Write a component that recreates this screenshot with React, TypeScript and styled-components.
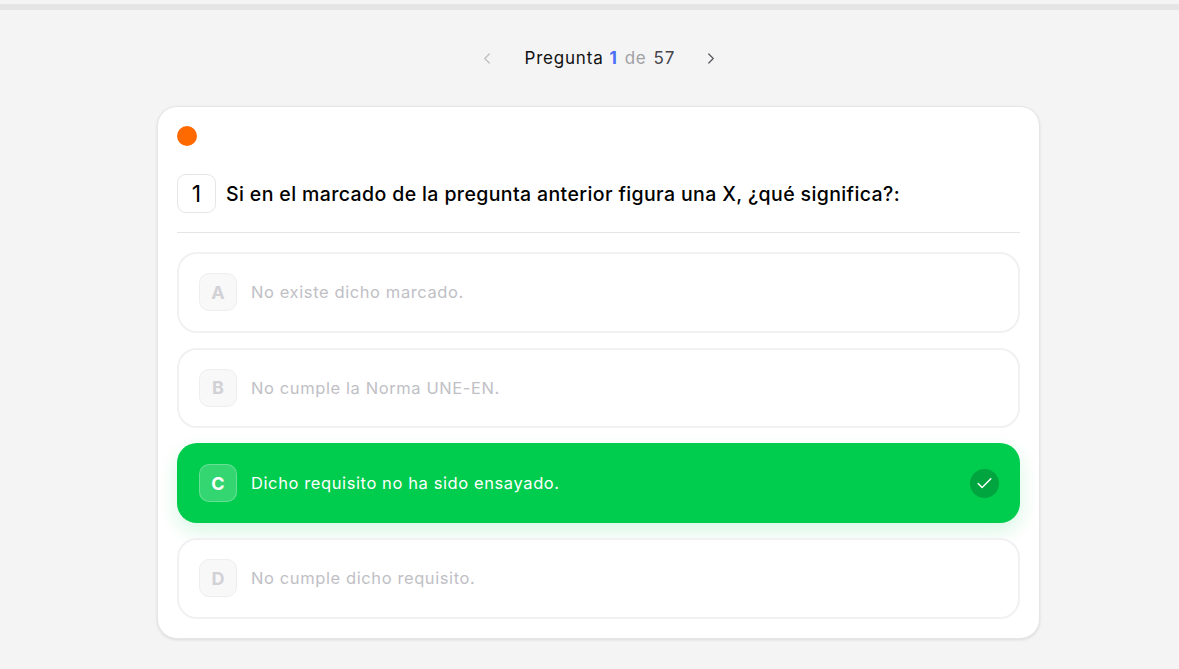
import React from 'react';
import styled, { createGlobalStyle } from 'styled-components';
import { ChevronLeft, ChevronRight, Check } from 'lucide-react';

const GlobalStyle = createGlobalStyle`
  html, body {
    margin: 0;
    padding: 0;
    background: #f4f4f4;
    font-family: Inter, "Open Sans", "Liberation Sans", sans-serif;
    overflow: hidden;
  }
  * {
    box-sizing: border-box;
  }
`;

const Page = styled.div`
  height: 669px;
  padding-top: 4px;
`;

const ProgressTrack = styled.div`
  width: 100%;
  height: 6px;
  background: #e5e5e6;
`;

const Content = styled.main`
  display: flex;
  flex-direction: column;
  align-items: center;
  padding-left: 18px;
`;

const Pager = styled.nav`
  display: flex;
  align-items: center;
  justify-content: center;
  height: 96px;
`;

const PagerButton = styled.button<{ $dim?: boolean }>`
  display: flex;
  align-items: center;
  justify-content: center;
  width: 18px;
  height: 18px;
  padding: 0;
  border: 0;
  background: none;
  color: ${(p) => (p.$dim ? '#bdbdc2' : '#55555c')};
`;

const PagerLabel = styled.div`
  display: flex;
  align-items: baseline;
  width: 148px;
  margin: 0 29px;
  font-size: 17px;
  font-weight: 400;
  letter-spacing: 0.8px;
  white-space: nowrap;
  color: #111;
`;

const Current = styled.span`
  margin-left: 6px;
  font-weight: 700;
  color: #4a6cf7;
`;

const Of = styled.span`
  margin-left: 7px;
  color: #a0a0a5;
`;

const Total = styled.span`
  margin-left: 7px;
  color: #45454b;
`;

const Card = styled.section`
  width: 883px;
  height: 533px;
  padding: 19px 19px 0;
  background: #fff;
  border: 1px solid #e6e6e6;
  border-radius: 20px;
  box-shadow: 0 1px 3px rgba(0, 0, 0, 0.1);
`;

const Dot = styled.div`
  width: 20px;
  height: 20px;
  border-radius: 50%;
  background: #ff6a00;
`;

const Question = styled.div`
  display: flex;
  align-items: center;
  gap: 10px;
  margin-top: 28px;
  padding-bottom: 19px;
  border-bottom: 1px solid #e5e5e7;
`;

const NumberBox = styled.div`
  display: flex;
  align-items: center;
  justify-content: center;
  width: 39px;
  height: 39px;
  border: 1px solid #e6e6e8;
  border-radius: 9px;
  font-size: 23px;
  font-weight: 400;
  color: #000;
`;

const QuestionText = styled.h1`
  margin: 0;
  font-size: 19.5px;
  font-weight: 500;
  letter-spacing: 0.38px;
  color: #000;
`;

const Options = styled.div`
  display: flex;
  flex-direction: column;
  gap: 15px;
  margin-top: 19px;
`;

const Option = styled.div<{ $correct?: boolean }>`
  display: flex;
  align-items: center;
  height: ${(p) => (p.$correct ? '80px' : '80.5px')};
  padding: ${(p) => (p.$correct ? '0 21px 0 22px' : '0 20px')};
  border: ${(p) => (p.$correct ? '0' : '2px solid #f1f1f3')};
  border-radius: 20px;
  background: ${(p) => (p.$correct ? '#00cc4e' : '#fff')};
  box-shadow: ${(p) => (p.$correct ? '0 8px 20px rgba(0, 204, 78, 0.16)' : 'none')};
`;

const Letter = styled.div<{ $correct?: boolean }>`
  display: flex;
  align-items: center;
  justify-content: center;
  flex: none;
  width: 38px;
  height: 38px;
  border-radius: 10px;
  border: 1px solid ${(p) => (p.$correct ? 'rgba(255, 255, 255, 0.25)' : '#eeeef0')};
  background: ${(p) => (p.$correct ? 'rgba(255, 255, 255, 0.2)' : '#f8f8f9')};
  color: ${(p) => (p.$correct ? '#fff' : '#d1d1d6')};
  font-size: 18px;
  font-weight: 700;
`;

const OptionText = styled.span<{ $correct?: boolean }>`
  flex: 1;
  margin-left: 14px;
  font-size: 16.5px;
  letter-spacing: 0.6px;
  color: ${(p) => (p.$correct ? '#fff' : '#c0c0c5')};
`;

const CheckMark = styled.div`
  display: flex;
  align-items: center;
  justify-content: center;
  width: 29px;
  height: 29px;
  border-radius: 50%;
  background: #00a53f;
  color: #fff;
`;

const options = [
  { letter: 'A', text: 'No existe dicho marcado.' },
  { letter: 'B', text: 'No cumple la Norma UNE-EN.' },
  { letter: 'C', text: 'Dicho requisito no ha sido ensayado.', correct: true },
  { letter: 'D', text: 'No cumple dicho requisito.' }
];

const App: React.FC = () => {
  return (
    <Page>
      <GlobalStyle />
      <ProgressTrack />
      <Content>
        <Pager>
          <PagerButton $dim>
            <ChevronLeft size={19} strokeWidth={1.6} />
          </PagerButton>
          <PagerLabel>
            Pregunta<Current>1</Current>
            <Of>de</Of>
            <Total>57</Total>
          </PagerLabel>
          <PagerButton>
            <ChevronRight size={19} strokeWidth={1.6} />
          </PagerButton>
        </Pager>
        <Card>
          <Dot />
          <Question>
            <NumberBox>1</NumberBox>
            <QuestionText>Si en el marcado de la pregunta anterior figura una X, ¿qué significa?:</QuestionText>
          </Question>
          <Options>
            {options.map((o) => (
              <Option key={o.letter} $correct={o.correct}>
                <Letter $correct={o.correct}>{o.letter}</Letter>
                <OptionText $correct={o.correct}>{o.text}</OptionText>
                {o.correct && (
                  <CheckMark>
                    <Check size={19} strokeWidth={1.8} />
                  </CheckMark>
                )}
              </Option>
            ))}
          </Options>
        </Card>
      </Content>
    </Page>
  );
};

export default App;
